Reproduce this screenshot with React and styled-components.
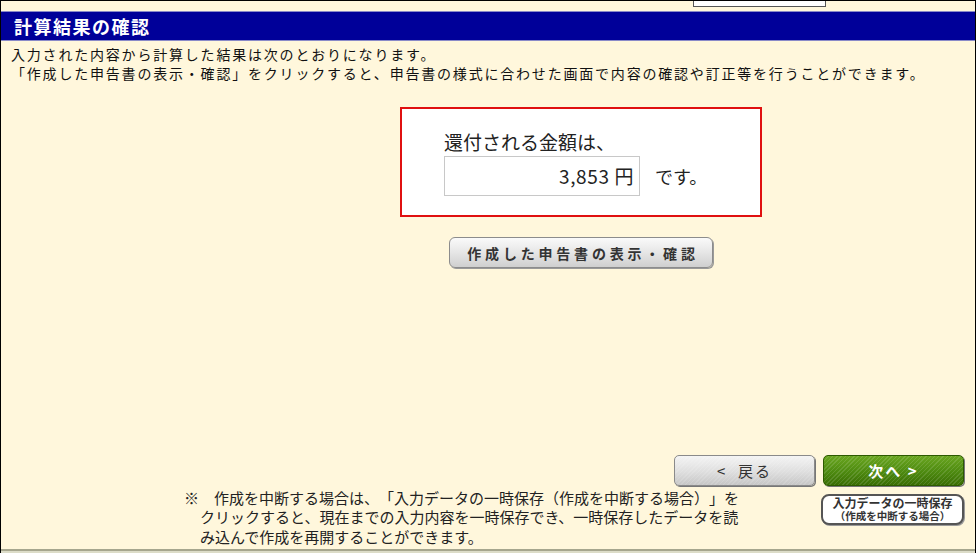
import React from 'react'
import styled, { createGlobalStyle } from 'styled-components'

const GlobalStyle = createGlobalStyle`
  html, body { margin: 0; padding: 0; background: #fff; }
  body {
    font-family: "Noto Sans CJK JP", "Noto Sans", sans-serif;
    text-spacing-trim: space-all;
  }
`

const Frame = styled.div`
  box-sizing: border-box;
  width: 976px;
  height: 553px;
  border: 1px solid #000;
  border-bottom: none;
  background: #fff7dc;
  display: flex;
  flex-direction: column;
  overflow: hidden;
`

const TopStrip = styled.div`
  height: 10px;
  display: flex;
  padding-left: 692px;
`

const TabStub = styled.div`
  box-sizing: border-box;
  width: 133px;
  height: 6px;
  background: #fff;
  border: 1px solid #555;
  border-top: none;
`

const TitleBar = styled.h1`
  margin: 0;
  height: 28px;
  background: #000099;
  border-top: 1px solid #8a8ac8;
  border-bottom: 1px solid #8a8ac8;
  color: #fff;
  font-size: 18px;
  font-weight: bold;
  line-height: 28px;
  padding-left: 13px;
  letter-spacing: 1.5px;
`

const Lead = styled.div`
  margin-top: 4px;
  padding-left: 10px;
  font-size: 14px;
  line-height: 19px;
  letter-spacing: 1.8px;
  color: #111;
`

const Main = styled.div`
  flex: 1;
  display: flex;
  flex-direction: column;
  align-items: center;
  padding-left: 186px;
  padding-top: 24px;
`

const ResultBox = styled.div`
  box-sizing: border-box;
  width: 362px;
  height: 110px;
  background: #fff;
  border: 2px solid #e01010;
  padding: 21px 0 0 42px;
  color: #222;
`

const ResultLabel = styled.div`
  font-size: 19px;
  line-height: 24px;
`

const AmountRow = styled.div`
  display: flex;
  align-items: center;
  gap: 15px;
  margin-top: 2px;
`

const AmountField = styled.div`
  box-sizing: border-box;
  width: 196px;
  height: 40px;
  border: 1px solid #c8c8c8;
  font-size: 19px;
  line-height: 38px;
  text-align: right;
  padding-right: 5px;
  letter-spacing: 0.6px;
`

const Suffix = styled.span`
  font-size: 18px;
`

const hatch = `repeating-linear-gradient(135deg, rgba(255,255,255,0.12) 0 1px, rgba(255,255,255,0) 1px 3px)`

const ViewButton = styled.button`
  box-sizing: border-box;
  margin-top: 20px;
  width: 264px;
  height: 31px;
  border: 1px solid #8c8c8c;
  border-radius: 6px;
  background: linear-gradient(#fafafa, #e6e6e6 50%, #cfcfcf);
  box-shadow: 1px 1px 0 #9a9a9a;
  font-family: "Noto Sans CJK JP", sans-serif;
  font-size: 14px;
  font-weight: bold;
  letter-spacing: 3.8px;
  color: #333;
  padding: 0 0 0 4px;
`

const Footer = styled.div`
  display: flex;
  flex-direction: column;
  padding-bottom: 3px;
  border-bottom: 2px solid #a6a68e;
  box-shadow: 0 2px 0 #dcdcc8;
  margin-bottom: 2px;
`

const NavRow = styled.div`
  display: flex;
  justify-content: flex-end;
  gap: 8px;
  padding-right: 11px;
`

const NavButton = styled.button`
  box-sizing: border-box;
  width: 141px;
  height: 31px;
  border-radius: 5px;
  font-family: "Noto Sans CJK JP", sans-serif;
  font-size: 15px;
  letter-spacing: 2px;
  border: 1px solid ${p => (p.$primary ? '#2d5a00' : '#8a8a8a')};
  color: ${p => (p.$primary ? '#fff' : '#333')};
  font-weight: ${p => (p.$primary ? 'bold' : 'normal')};
  background: ${hatch},
    ${p => (p.$primary
      ? 'linear-gradient(#6aa620, #4d8a10 55%, #3a6e04)'
      : 'linear-gradient(#f4f4f4, #dedede 55%, #c6c6c6)')};
  box-shadow: 1px 1px 0 #777;
`

const BottomRow = styled.div`
  display: flex;
  align-items: flex-start;
  margin-top: 1px;
`

const Note = styled.div`
  flex: 1;
  padding-left: 183px;
  padding-top: 1px;
  font-size: 15px;
  line-height: 19.5px;
  color: #222;
`

const NoteLine = styled.div`
  padding-left: ${p => (p.$indent ? '16px' : '0')};
  white-space: nowrap;
`

const SaveButton = styled.button`
  box-sizing: border-box;
  width: 143px;
  height: 31px;
  margin: 7px 11px 0 0;
  border: 2px solid #555;
  border-radius: 8px;
  background: #fff;
  color: #333;
  font-family: "Noto Sans CJK JP", sans-serif;
  font-weight: bold;
  padding: 0;
  display: flex;
  flex-direction: column;
  align-items: center;
  justify-content: center;
  gap: 1px;
  box-shadow: 1px 1px 0 #999;
`

const SaveMain = styled.span`
  display: block;
  font-size: 12px;
  line-height: 13px;
`

const SaveSub = styled.span`
  display: block;
  font-size: 10.5px;
  line-height: 12px;
`

export default function App() {
  return (
    <>
      <GlobalStyle />
      <Frame>
        <TopStrip>
          <TabStub />
        </TopStrip>
        <TitleBar>計算結果の確認</TitleBar>
        <Lead>
          <div>入力された内容から計算した結果は次のとおりになります。</div>
          <div>「作成した申告書の表示・確認」をクリックすると、申告書の様式に合わせた画面で内容の確認や訂正等を行うことができます。</div>
        </Lead>
        <Main>
          <ResultBox>
            <ResultLabel>還付される金額は、</ResultLabel>
            <AmountRow>
              <AmountField>3,853 円</AmountField>
              <Suffix>です。</Suffix>
            </AmountRow>
          </ResultBox>
          <ViewButton>作成した申告書の表示・確認</ViewButton>
        </Main>
        <Footer>
          <NavRow>
            <NavButton>&lt;&nbsp;&nbsp;戻る</NavButton>
            <NavButton $primary>次へ&nbsp;&gt;</NavButton>
          </NavRow>
          <BottomRow>
            <Note>
              <NoteLine>※　作成を中断する場合は、「入力データの一時保存（作成を中断する場合）」を</NoteLine>
              <NoteLine $indent>クリックすると、現在までの入力内容を一時保存でき、一時保存したデータを読</NoteLine>
              <NoteLine $indent>み込んで作成を再開することができます。</NoteLine>
            </Note>
            <SaveButton>
              <SaveMain>入力データの一時保存</SaveMain>
              <SaveSub>（作成を中断する場合）</SaveSub>
            </SaveButton>
          </BottomRow>
        </Footer>
      </Frame>
    </>
  )
}
